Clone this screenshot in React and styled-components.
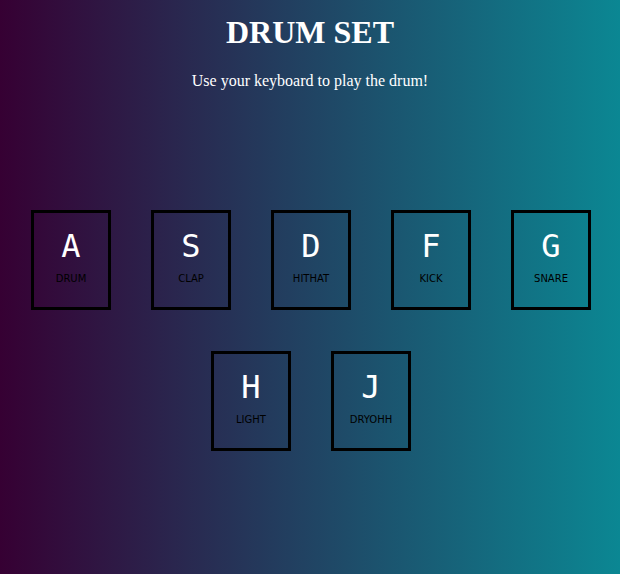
import React from 'react';
import styled, { createGlobalStyle } from 'styled-components';

const keys = [
  [
    { key: 'A', sound: 'drum' },
    { key: 'S', sound: 'clap' },
    { key: 'D', sound: 'hithat' },
    { key: 'F', sound: 'kick' },
    { key: 'G', sound: 'snare' },
  ],
  [
    { key: 'H', sound: 'light' },
    { key: 'J', sound: 'dryohh' },
  ],
];

const GlobalStyle = createGlobalStyle`
  html, body {
    margin: 0;
    padding: 0;
  }
  body {
    min-height: 100vh;
    background: linear-gradient(to right, #360033, #0b8793);
  }
`;

const App = () => {
  return (
    <Page>
      <GlobalStyle />
      <Title>DRUM SET</Title>
      <Hint>Use your keyboard to play the drum!</Hint>
      <Board>
        {keys.map((row, i) => (
          <KeyRow key={i}>
            {row.map(k => (
              <Key key={k.key}>
                <Letter>{k.key}</Letter>
                <Sound>{k.sound}</Sound>
              </Key>
            ))}
          </KeyRow>
        ))}
      </Board>
    </Page>
  );
};

const Page = styled.div`
  font-family: "Liberation Serif", "Times New Roman", serif;
  color: #fff;
  min-height: 574px;
  text-align: center;
`;

const Title = styled.h1`
  font-size: 32px;
  font-weight: bold;
  margin: 0;
  padding-top: 14px;
  line-height: 37px;
`;

const Hint = styled.p`
  font-size: 16px;
  margin: 21px 0 0;
  line-height: 18px;
`;

const Board = styled.div`
  display: flex;
  flex-direction: column;
  gap: 41px;
  margin-top: 120px;
  padding-left: 2px;
`;

const KeyRow = styled.div`
  display: flex;
  justify-content: center;
  gap: 40px;
`;

const Key = styled.div`
  box-sizing: border-box;
  width: 80px;
  height: 100px;
  border: 3px solid #000;
  display: flex;
  flex-direction: column;
  align-items: center;
  padding-top: 15px;
`;

const Letter = styled.span`
  font-family: "DejaVu Sans Mono", monospace;
  font-size: 32px;
  line-height: 37px;
  color: #fff;
`;

const Sound = styled.span`
  font-family: "Comic Sans MS", "DejaVu Sans", sans-serif;
  font-size: 10px;
  line-height: 12px;
  margin-top: 8px;
  text-transform: uppercase;
  color: #000;
`;

export default App;
